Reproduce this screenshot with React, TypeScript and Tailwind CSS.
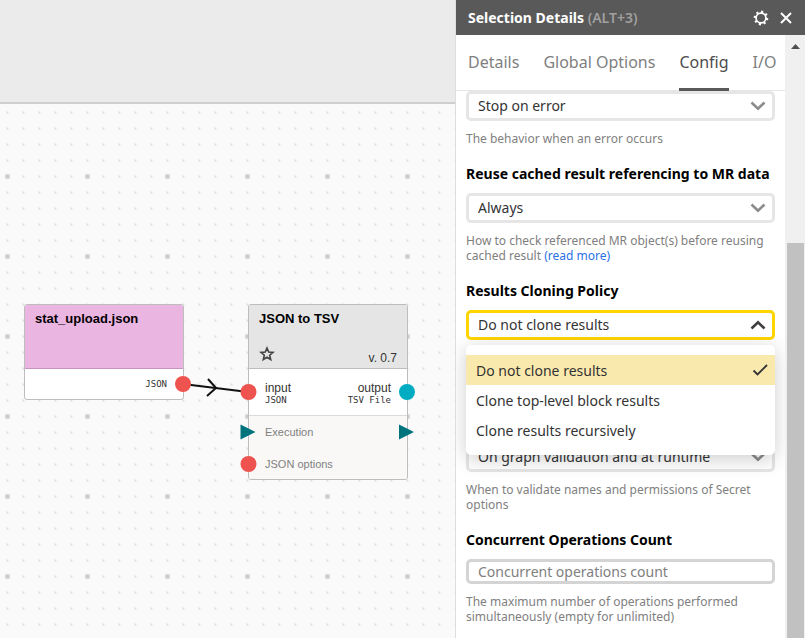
import { useState } from "react";
import type { ReactNode } from "react";

function Chevron({ up = false }: { up?: boolean }) {
  return (
    <svg
      className={`pointer-events-none absolute right-[9px] top-2 h-[14px] w-4 ${up ? "rotate-180 text-[#404040]" : "text-[#8c8c8c]"}`}
      viewBox="0 0 16 14"
      fill="none"
      stroke="currentColor"
      strokeWidth="2.6"
    >
      <path d="M1.500 3.500 L8 9.800 L14.500 3.500" />
    </svg>
  );
}

function SelectBox({
  id,
  options,
  open = false,
  label,
}: {
  id: string;
  options: string[];
  open?: boolean;
  label?: string;
}) {
  return (
    <div className="relative">
      <select
        id={id}
        aria-label={label}
        className={`block h-[30px] w-full appearance-none rounded-[5px] border-[3px] bg-white pl-[9px] pr-8 text-[14px] leading-5 text-[#333] outline-none ${open ? "border-[#ffd500]" : "border-[#e6e6e6]"}`}
      >
        {options.map((o) => (
          <option key={o}>{o}</option>
        ))}
      </select>
      <Chevron up={open} />
    </div>
  );
}

function Label({ id, children }: { id: string; children: ReactNode }) {
  return (
    <label
      htmlFor={id}
      className="mb-[10px] mt-[19px] block whitespace-nowrap text-[14px] font-bold leading-[18px] text-black"
    >
      {children}
    </label>
  );
}

function Help({ children }: { children: ReactNode }) {
  return <p className="mt-[10px] text-[12px] leading-[15px] text-[#808080]">{children}</p>;
}

const cloneOptions = ["Do not clone results", "Clone top-level block results", "Clone results recursively"];

function CloneMenu() {
  const [chosen, setChosen] = useState(0);
  return (
    <ul
      role="listbox"
      aria-label="Results Cloning Policy"
      className="absolute inset-x-0 top-[35px] z-10 rounded-[5px] bg-white py-[10px] shadow-[0_4px_20px_rgba(0,0,0,0.2)]"
    >
      {cloneOptions.map((o, i) => (
        <li key={o} role="option" aria-selected={i === chosen}>
          <button
            type="button"
            onClick={() => setChosen(i)}
            className={`flex h-[30px] w-full items-center justify-between pl-[10px] pr-[7px] text-left text-[14px] text-[#333] ${i === chosen ? "bg-[#fae9ad]" : ""}`}
          >
            {o}
            {i === chosen && (
              <svg className="h-4 w-4" viewBox="0 0 16 16" fill="none" stroke="#333" strokeWidth="1.8">
                <path d="M1.500 8.500 L5.500 12.500 L15 3" />
              </svg>
            )}
          </button>
        </li>
      ))}
    </ul>
  );
}

const tabs = ["Details", "Global Options", "Config", "I/O"];
const teeth = [0, 45, 90, 135, 180, 225, 270, 315];

function Panel() {
  return (
    <aside className="flex w-[349px] shrink-0 flex-col bg-white font-['Noto_Sans',sans-serif]">
      <header className="flex h-[35px] shrink-0 items-center bg-[#595959] pl-3 pr-[11px] text-white">
        <h2 className="text-[14px] font-bold">
          Selection Details <span className="font-semibold text-[#a0a0a0]">(ALT+3)</span>
        </h2>
        <button type="button" aria-label="Settings" className="ml-auto">
          <svg className="h-4 w-4" viewBox="0 0 16 16" fill="none" stroke="white">
            <circle cx="8" cy="8" r="4.900" strokeWidth="1.700" />
            {teeth.map((a) => (
              <path key={a} d="M8 0.700 V3" strokeWidth="2.200" transform={`rotate(${a + 10} 8 8)`} />
            ))}
          </svg>
        </button>
        <button type="button" aria-label="Close" className="ml-[9px]">
          <svg className="h-4 w-4" viewBox="0 0 16 16" stroke="white" strokeWidth="2">
            <path d="M3 3 L13 13 M13 3 L3 13" />
          </svg>
        </button>
      </header>
      <div className="flex min-h-0 flex-1">
        <div className="flex min-w-0 flex-1 flex-col">
          <nav className="flex h-14 shrink-0 gap-6 border-b border-[#e6e6e6] pl-3">
            {tabs.map((t) => (
              <button
                key={t}
                type="button"
                className={`-mb-px whitespace-nowrap border-b-[3px] text-[16px] ${t === "Config" ? "border-[#595959] text-[#4d4d4d]" : "border-transparent text-[#808080]"}`}
              >
                {t}
              </button>
            ))}
          </nav>
          <form className="min-h-0 flex-1 overflow-hidden px-[10px]">
            <SelectBox id="on-error" label="Error policy" options={["Stop on error"]} />
            <Help>The behavior when an error occurs</Help>

            <Label id="reuse">Reuse cached result referencing to MR data</Label>
            <SelectBox id="reuse" options={["Always"]} />
            <Help>
              How to check referenced MR object(s) before reusing cached result{" "}
              <a href="#more" className="text-[#2b70e4]">
                (read more)
              </a>
            </Help>

            <Label id="cloning">Results Cloning Policy</Label>
            <div className="relative mb-[102px]">
              <SelectBox id="cloning" options={cloneOptions} open />
              <CloneMenu />
            </div>

            <SelectBox id="secrets" label="Secret validation" options={["On graph validation and at runtime"]} />
            <Help>When to validate names and permissions of Secret options</Help>

            <Label id="count">Concurrent Operations Count</Label>
            <input
              id="count"
              type="text"
              placeholder="Concurrent operations count"
              className="block h-[25px] w-full rounded-[5px] border-[3px] border-[#d4d4d4] px-[9px] text-[14px] leading-[18px] text-[#333] outline-none placeholder:text-[#808080]"
            />
            <Help>The maximum number of operations performed simultaneously (empty for unlimited)</Help>
          </form>
        </div>
        <div className="flex w-5 shrink-0 flex-col border-l-2 border-[#f0f0f0] bg-[#f0f0f0] pr-px">
          <svg className="h-[208px] w-full" viewBox="0 0 17 208" fill="#505050">
            <path d="M4 14 L8.500 9 L13 14 Z" />
          </svg>
          <div className="flex-1 bg-[#c1c1c1]" />
        </div>
      </div>
    </aside>
  );
}

function Wires() {
  return (
    <svg className="pointer-events-none absolute left-0 top-0 h-full w-full">
      <path d="M183 384 L248 392" stroke="#111" strokeWidth="2" />
      <path d="M208 379 L216 388 L207 396" stroke="#111" strokeWidth="2" fill="none" />
      <g fill="#ef5350">
        <circle cx="183" cy="384" r="8" />
        <circle cx="248.500" cy="392" r="8" />
        <circle cx="248.500" cy="464" r="8" />
      </g>
      <circle cx="407" cy="392" r="8" fill="#00acc1" />
      <path d="M240.500 424.500 V439.500 L255.500 432 Z M399 424.500 V439.500 L414 432 Z" fill="#00737d" />
    </svg>
  );
}

function Canvas() {
  return (
    <main className="relative flex min-w-0 flex-1 flex-col overflow-hidden border-r border-[#dedede] bg-[#fafafa] font-['Liberation_Sans',Arial,sans-serif]">
      <svg className="absolute left-0 top-0 h-full w-full">
        <defs>
          <pattern id="dots" x="-0.5" y="8.500" width="16" height="16" patternUnits="userSpaceOnUse">
            <circle cx="8" cy="8" r="1.100" fill="#d9d9d9" />
          </pattern>
          <pattern id="marks" x="-32.500" y="56.500" width="80" height="80" patternUnits="userSpaceOnUse">
            <rect x="37.750" y="37.750" width="4.500" height="4.500" rx="1" fill="#cccccc" />
          </pattern>
        </defs>
        <rect width="100%" height="100%" fill="url(#dots)" />
        <rect width="100%" height="100%" fill="url(#marks)" />
      </svg>
      <div className="relative h-[104px] border-b-2 border-[#cfcfcf] bg-[#ebebeb]" />

      <section className="absolute left-6 top-[304px] h-24 w-40 rounded-[3px] border border-[#bdbdbd] bg-white">
        <h3 className="h-16 rounded-t-[2px] border-b border-[#c795bf] bg-[#ebb5e2] pl-[10px] pt-[6px] text-[13px] font-bold leading-4 text-black">
          stat_upload.json
        </h3>
        <p className="pr-4 pt-2 text-right font-['DejaVu_Sans_Mono',monospace] text-[9px] leading-[14px] text-[#333]">JSON</p>
      </section>

      <section className="absolute left-[248px] top-[304px] h-44 w-40 rounded-[3px] border border-[#bdbdbd] bg-white">
        <div className="flex h-16 flex-col justify-between rounded-t-[2px] border-b border-[#bdbdbd] bg-[#e5e5e5] px-[10px] pb-[2px] pt-[6px]">
          <h3 className="text-[13px] font-bold leading-4 text-black">JSON to TSV</h3>
          <div className="flex items-end justify-between">
            <button type="button" aria-label="Add to favorites" className="mb-1">
              <svg className="h-4 w-4" viewBox="0 0 16 16" fill="none" stroke="#444" strokeWidth="1.6">
                <path d="M8 2 L9.700 6 L14 6.400 L10.700 9.200 L11.700 13.500 L8 11.200 L4.300 13.500 L5.300 9.200 L2 6.400 L6.300 6 Z" />
              </svg>
            </button>
            <span className="text-[12px] leading-4 text-[#333]">v. 0.7</span>
          </div>
        </div>
        <div className="flex h-[47px] justify-between border-b border-[#dcdcdc] px-4 pt-3 text-[12px] leading-[14px] text-[#333]">
          <div>
            input
            <div className="font-['DejaVu_Sans_Mono',monospace] text-[9px] leading-[10px]">JSON</div>
          </div>
          <div className="text-right">
            output
            <div className="font-['DejaVu_Sans_Mono',monospace] text-[9px] leading-[10px]">TSV File</div>
          </div>
        </div>
        <div className="h-[63px] rounded-b-[2px] bg-[#f9f8f7] pl-4 text-[11px] leading-8 text-[#808080]">
          <p>Execution</p>
          <p>JSON options</p>
        </div>
      </section>
      <Wires />
    </main>
  );
}

export default function App() {
  return (
    <div className="flex h-screen w-full overflow-hidden">
      <Canvas />
      <Panel />
    </div>
  );
}
